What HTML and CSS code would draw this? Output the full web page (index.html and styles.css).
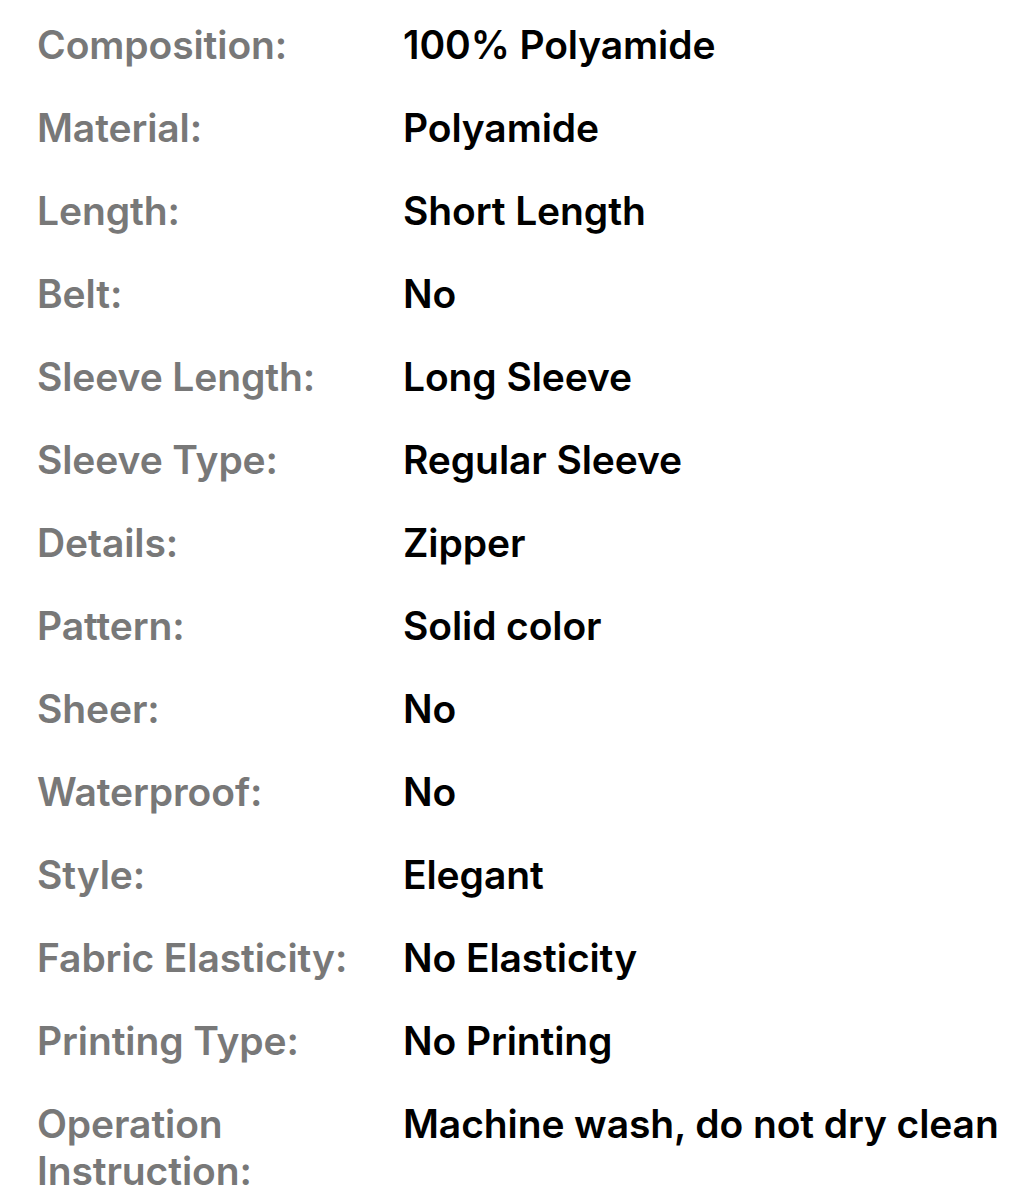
FILE: index.html
```html
<!DOCTYPE html>
<html>
<head>
<meta charset="utf-8">
<link rel="stylesheet" href="styles.css">
</head>
<body>
<dl class="specs">
  <dt>Composition:</dt><dd>100% Polyamide</dd>
  <dt>Material:</dt><dd>Polyamide</dd>
  <dt>Length:</dt><dd>Short Length</dd>
  <dt>Belt:</dt><dd>No</dd>
  <dt>Sleeve Length:</dt><dd>Long Sleeve</dd>
  <dt>Sleeve Type:</dt><dd>Regular Sleeve</dd>
  <dt>Details:</dt><dd>Zipper</dd>
  <dt>Pattern:</dt><dd>Solid color</dd>
  <dt>Sheer:</dt><dd>No</dd>
  <dt>Waterproof:</dt><dd>No</dd>
  <dt>Style:</dt><dd>Elegant</dd>
  <dt>Fabric Elasticity:</dt><dd>No Elasticity</dd>
  <dt>Printing Type:</dt><dd>No Printing</dd>
  <dt>Operation Instruction:</dt><dd>Machine wash, do not dry clean</dd>
</dl>
</body>
</html>
```
FILE: styles.css
```css
html, body {
  margin: 0;
  padding: 0;
  background: #ffffff;
}
body {
  font-family: Inter, "Noto Sans", "Liberation Sans", sans-serif;
  font-weight: 600;
  font-size: 39px;
  line-height: 47px;
  letter-spacing: -0.1px;
}
.specs {
  margin: 0;
  padding: 21px 0 0 37px;
  display: grid;
  grid-template-columns: 340px 1fr;
  column-gap: 26px;
  row-gap: 36px;
}
.specs dt {
  color: #787878;
  margin: 0;
}
.specs dd {
  color: #000000;
  margin: 0;
}
```
